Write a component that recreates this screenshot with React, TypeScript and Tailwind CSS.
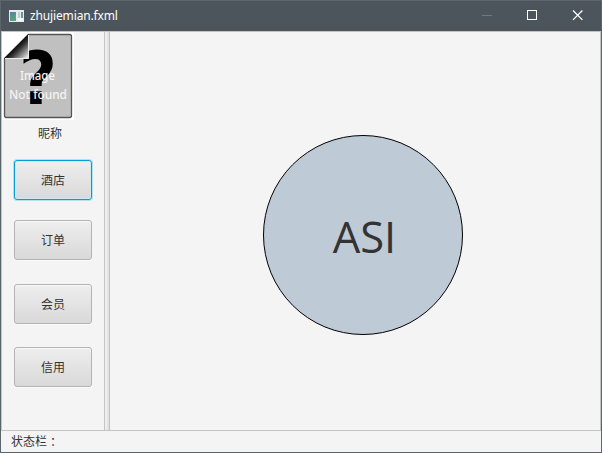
const uiFont = "font-['Open_Sans','Noto_Sans_CJK_SC',sans-serif]";

function TitleBar() {
  return (
    <header className="flex h-[30px] shrink-0 items-center bg-[#4c555b] pl-2 text-white">
      <svg width="15" height="12" viewBox="0 0 15 12" className="shrink-0">
        <defs>
          <linearGradient id="pane" x1="0" y1="0" x2="0.6" y2="1">
            <stop offset="0" stopColor="#547fa8" />
            <stop offset="1" stopColor="#55a978" />
          </linearGradient>
        </defs>
        <rect width="15" height="12" fill="#e9ebec" />
        <rect x="1" y="2" width="6" height="9" fill="url(#pane)" />
        <rect x="9" y="2" width="2" height="6" fill="#b9d0d2" />
        <rect x="12" y="2" width="2" height="6" fill="#5f9aa0" />
        <rect x="9" y="8" width="5" height="3" fill="#f8f8f8" />
      </svg>
      <span className="ml-[6px] font-['Noto_Sans',sans-serif] text-[12px] leading-4 tracking-[-0.14px]">zhujiemian.fxml</span>
      <div className="ml-auto flex pr-px">
        <svg width="46" height="30" viewBox="0 0 46 30" shapeRendering="crispEdges">
          <path d="M18 14.5h10" stroke="#737a7e" />
        </svg>
        <svg width="45" height="30" viewBox="0 0 45 30" fill="none" shapeRendering="crispEdges">
          <rect x="17.5" y="9.5" width="9" height="9" stroke="#fff" />
        </svg>
        <svg width="45" height="30" viewBox="0 0 45 30">
          <path d="M18 9.5l9.4 9.4m0-9.4l-9.4 9.4" stroke="#fff" strokeWidth="1.3" />
        </svg>
      </div>
    </header>
  );
}

function MissingImage() {
  return (
    <svg width="72" height="88" viewBox="0 0 72 88" className="block">
      <defs>
        <linearGradient id="fold" gradientUnits="userSpaceOnUse" x1="14" y1="14" x2="26" y2="26">
          <stop offset="0" stopColor="#080808" />
          <stop offset="0.25" stopColor="#333" />
          <stop offset="1" stopColor="#f0f0f0" />
        </linearGradient>
      </defs>
      <rect width="72" height="88" fill="#fff" />
      <path d="M26.5 2.5h41q2 0 2 2v79q0 2-2 2h-63q-2 0-2-2v-57z" fill="#c0c0c0" stroke="#555" strokeWidth="1.3" />
      <text x="17" y="71.5" textLength="38" lengthAdjust="spacingAndGlyphs" className="font-['DejaVu_Sans',sans-serif] text-[73px] font-bold" fill="#000">?</text>
      <path d="M26.5 2L2 26.5h24.5z" fill="url(#fold)" />
      <path d="M26.5 3v23.5H3" fill="none" stroke="#ededed" />
      <g fill="#f4f4f4" className="font-['Noto_Sans',sans-serif] text-[12px] font-medium">
        <text x="18" y="48" textLength="35" lengthAdjust="spacingAndGlyphs">Image</text>
        <text x="7" y="67" textLength="58" lengthAdjust="spacingAndGlyphs">Not found</text>
      </g>
    </svg>
  );
}

function NavButton({ label, active = false }: { label: string; active?: boolean }) {
  const frame = active
    ? "border-[#039ed3] shadow-[0_0_0_1px_#b5dfed,inset_0_0_0_1px_#d2e7ee]"
    : "border-[#b3b3b3] shadow-[0_1px_0_#fafafa,inset_0_1px_0_#f8f8f8]";
  return (
    <button className={`flex h-10 w-[78px] items-center justify-center rounded-[3px] border bg-linear-to-b from-[#eeeeee] to-[#d9d9d9] pt-[2px] text-[12px] leading-4 text-[#333] ${frame}`}>
      {label}
    </button>
  );
}

export default function App() {
  return (
    <div className={`flex h-[453px] w-[602px] flex-col overflow-hidden border border-[#5b656c] bg-[#f4f4f4] ${uiFont} text-[#333]`}>
      <TitleBar />
      <main className="flex h-[400px] shrink-0 border border-[#c3c3c3]">
        <aside className="w-[102px] shrink-0">
          <MissingImage />
          <div className="pt-[6px] pl-9 text-[12px] leading-4">昵称</div>
          <nav className="flex flex-col pt-[18px] pl-3">
            <NavButton label="酒店" active />
            <div className="pt-5"><NavButton label="订单" /></div>
            <div className="pt-6"><NavButton label="会员" /></div>
            <div className="pt-[23px]"><NavButton label="信用" /></div>
          </nav>
        </aside>
        <div className="w-[6px] shrink-0 border-x border-[#c2c2c2] bg-linear-to-r from-[#f5f5f5] to-[#dedede]" />
        <section className="flex grow items-start pt-[103px] pl-[153px]">
          <div className="flex h-[200px] w-[200px] items-center justify-center rounded-full border border-black bg-[#becad6]">
            <span className="pt-[4px] pl-[3px] text-[43.5px] leading-none">ASI</span>
          </div>
        </section>
      </main>
      <footer className="flex grow items-center pl-[10px] text-[12px] leading-4">
        状态栏<span className="font-['Noto_Sans_CJK_TC',sans-serif]" lang="zh-TW">：</span>
      </footer>
    </div>
  );
}
